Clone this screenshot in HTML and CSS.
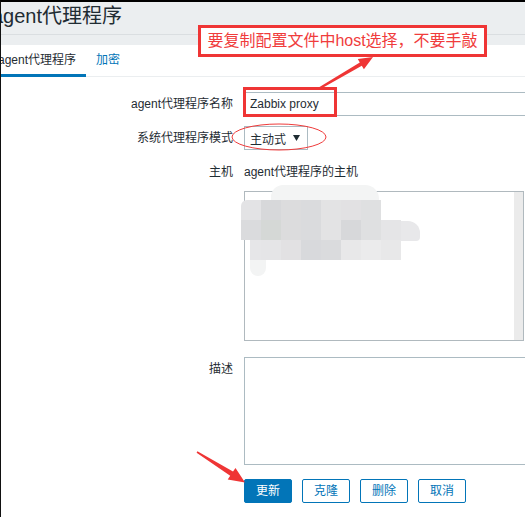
FILE: index.html
```html
<!DOCTYPE html>
<html lang="zh-CN">
<head>
<meta charset="utf-8">
<title>agent代理程序</title>
<link rel="stylesheet" href="styles.css">
</head>
<body>
<div class="frame">
  <header class="page-header">
    <h1 class="title">agent代理程序</h1>
  </header>
  <main class="panel">
    <nav class="tabs">
      <a class="tab active">agent代理程序</a>
      <a class="tab link">加密</a>
    </nav>
    <form class="form">
      <div class="row">
        <label class="label">agent代理程序名称</label>
        <div class="field"><input class="text-input" type="text" value="Zabbix proxy"></div>
      </div>
      <div class="row">
        <label class="label">系统代理程序模式</label>
        <div class="field">
          <div class="select"><span>主动式</span><svg class="caret" width="7" height="6" viewBox="0 0 7 6"><polygon points="0,0 7,0 3.5,6" fill="#1f2c33"/></svg></div>
        </div>
      </div>
      <div class="row row-hosts">
        <label class="label">主机</label>
        <div class="field">
          <div class="hosts-head">agent代理程序的主机</div>
          <div class="listbox"><div class="scrollbar"></div></div>
        </div>
      </div>
      <div class="row row-desc">
        <label class="label">描述</label>
        <div class="field"><textarea class="textarea"></textarea></div>
      </div>
      <div class="row">
        <span></span>
        <div class="field buttons">
          <button type="button" class="btn primary">更新</button>
          <button type="button" class="btn">克隆</button>
          <button type="button" class="btn">删除</button>
          <button type="button" class="btn">取消</button>
        </div>
      </div>
    </form>
  </main>

  <div class="overlay">
    <div class="blob blob-top"></div>
    <div class="blob blob-right"></div>
    <div class="blob blob-left"></div>
    <div class="mosaic">
      <i class="c1"></i><i class="c2"></i><i class="c3"></i><i class="c4"></i><i class="c5"></i><i class="c6"></i><i class="c7"></i><i class="c0"></i>
      <i class="c4"></i><i class="c8"></i><i class="c3"></i><i class="c4"></i><i class="c5"></i><i class="c2"></i><i class="c7"></i><i class="c9"></i>
      <i class="c0 half"></i><i class="c9"></i><i class="c6"></i><i class="ca"></i><i class="c4"></i><i class="cb"></i><i class="cc"></i><i class="cb"></i>
    </div>
    <div class="note">要复制配置文件中host选择，不要手敲</div>
    <div class="hilite"></div>
    <svg class="marks" width="525" height="517" viewBox="0 0 525 517">
      <polygon fill="#ef3535" points="373,57 363.9,69.3 361.8,65.8 320.5,88.9 319.5,87.1 359.8,62.4 357.8,58.9"/>
      <polygon fill="#ef3535" points="245,482.5 227.7,479.5 230.2,475.8 196.6,452.7 197.4,451.3 233,471.6 235.5,467.9"/>
      <ellipse cx="279" cy="137" rx="47" ry="13" fill="none" stroke="#ef3b3b" stroke-width="1"/>
    </svg>
  </div>
</div>
</body>
</html>
```

FILE: styles.css
```css
* { box-sizing: border-box; }

html, body {
  margin: 0;
  padding: 0;
}

body {
  width: 525px;
  height: 517px;
  overflow: hidden;
  font-family: "Liberation Sans", "Noto Sans CJK SC", sans-serif;
  font-size: 12px;
  color: #1f2c33;
  background: #ebeef0;
}

.frame {
  position: relative;
  width: 525px;
  height: 517px;
  border-top: 2px solid #000;
  border-left: 1px solid #111;
  overflow: hidden;
  background: #ebeef0;
  display: flex;
  flex-direction: column;
}

.page-header {
  height: 33px;
  flex: none;
  border-bottom: 1px solid #dadee1;
}

.title {
  margin: 0 0 0 -9px;
  font-size: 20px;
  font-weight: normal;
  line-height: 28px;
  white-space: nowrap;
  color: #1f2c33;
}

.panel {
  margin-top: 10px;
  flex: 1;
  background: #fff;
  overflow: hidden;
}

.tabs {
  display: flex;
  margin-left: -13px;
  border-bottom: 1px solid #ebeef0;
}

.tab {
  padding: 8px 10px 7px;
  line-height: 14px;
  border-bottom: 3px solid transparent;
  margin-bottom: -1px;
  white-space: nowrap;
  color: #1f2c33;
}

.tab.active { border-bottom-color: #0275b8; }
.tab.link { color: #0275b8; }

.form {
  padding-top: 15px;
}

.row {
  display: grid;
  grid-template-columns: 232px 1fr;
  column-gap: 11px;
  margin-bottom: 10px;
}

.label {
  text-align: right;
  line-height: 24px;
  white-space: nowrap;
}

.field {
  min-width: 0;
}

.text-input {
  display: block;
  width: 453px;
  height: 24px;
  margin: 0;
  padding: 0 5px;
  border: 1px solid #acbbc2;
  border-radius: 0;
  background: #fff;
  font: inherit;
  color: #1f2c33;
  outline: none;
}

.select {
  display: flex;
  align-items: center;
  justify-content: space-between;
  width: 64px;
  height: 24px;
  padding: 0 7px 0 5px;
  border: 1px solid #acbbc2;
  background: #fff;
}

.caret { display: block; }

.row-hosts { margin-bottom: 16px; }

.hosts-head {
  line-height: 24px;
  white-space: nowrap;
}

.listbox {
  position: relative;
  margin-top: 7px;
  width: 280px;
  height: 150px;
  border: 1px solid #b0b9be;
  background: #fff;
  display: flex;
  justify-content: flex-end;
}

.scrollbar {
  width: 9px;
  height: 100%;
  background: #ebebeb;
}

.row-desc { margin-bottom: 14px; }

.textarea {
  display: block;
  width: 453px;
  height: 108px;
  margin: 0;
  padding: 4px 5px;
  border: 1px solid #acbbc2;
  border-radius: 0;
  resize: none;
  font: inherit;
  outline: none;
}

.buttons {
  display: flex;
  gap: 10px;
}

.btn {
  width: 48px;
  height: 24px;
  margin: 0;
  padding: 0;
  border: 1px solid #0275b8;
  border-radius: 2px;
  background: #fff;
  color: #0275b8;
  font: inherit;
  font-size: 12px;
  line-height: 22px;
}

.btn.primary {
  background: #0275b8;
  color: #fff;
}

/* annotation layer */
.overlay {
  position: absolute;
  top: -2px;
  left: -1px;
  width: 525px;
  height: 517px;
  pointer-events: none;
}

.marks {
  position: absolute;
  left: 0;
  top: 0;
}

.note {
  position: absolute;
  left: 198px;
  top: 25px;
  width: 289px;
  height: 32px;
  border: 3px solid #ef3535;
  background: #fff;
  color: #f03c3c;
  font-size: 16px;
  line-height: 26px;
  text-align: center;
  white-space: nowrap;
}

.hilite {
  position: absolute;
  left: 243px;
  top: 87px;
  width: 94px;
  height: 30px;
  border: 3px solid #ef3535;
}

.blob {
  position: absolute;
  background: #f3f4f4;
}

.blob-top {
  left: 271px;
  top: 185px;
  width: 108px;
  height: 30px;
  border-radius: 12px 14px 0 0;
}

.blob-right {
  left: 390px;
  top: 221px;
  width: 30px;
  height: 20px;
  border-radius: 0 12px 4px 0;
  background: #e8e8ea;
}

.blob-left {
  left: 250px;
  top: 236px;
  width: 16px;
  height: 40px;
  border-radius: 0 0 8px 8px;
}

.mosaic {
  position: absolute;
  left: 241px;
  top: 200px;
  display: grid;
  grid-template-columns: repeat(8, 20px);
  grid-auto-rows: 20px;
}

.mosaic i { display: block; }
.mosaic .c0 { background: transparent; }
.mosaic .c1 { background: #e3e3e5; border-radius: 6px 0 0 0; }
.mosaic .c2 { background: #d7d8da; }
.mosaic .c3 { background: #dcdcdd; }
.mosaic .c4 { background: #dadbdd; }
.mosaic .c5 { background: #e3e3e4; }
.mosaic .c6 { background: #e2e1e3; }
.mosaic .c7 { background: #dfe0e1; }
.mosaic .c8 { background: #d5d8d6; }
.mosaic .c9 { background: #e5e5e7; }
.mosaic .ca { background: #d8d9dc; }
.mosaic .cb { background: #e8e8e9; }
.mosaic .cc { background: #ebebec; }
.mosaic .half { background: linear-gradient(90deg, transparent 45%, #e6e6e8 45%); }
```
